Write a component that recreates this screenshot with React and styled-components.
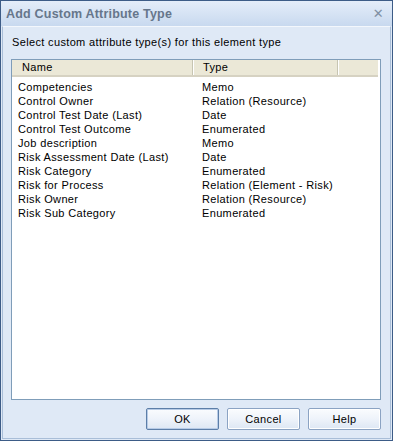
import React from "react";
import styled, { createGlobalStyle } from "styled-components";

const Global = createGlobalStyle`
  html, body { margin: 0; padding: 0; background: #ffffff; }
  * { box-sizing: border-box; }
`;

const Window = styled.div`
  width: 393px;
  height: 441px;
  border: 1px solid #3d5c87;
  background: #dfe9f6;
  display: flex;
  flex-direction: column;
  font-family: "Liberation Sans", Arial, sans-serif;
  font-size: 11px;
  letter-spacing: 0.35px;
  color: #000;
`;

const TitleBar = styled.div`
  height: 25px;
  flex: none;
  display: flex;
  align-items: center;
  justify-content: space-between;
  padding: 0 8px 0 5px;
  background: linear-gradient(#e4edf9 0%, #d6e3f4 50%, #c8d9ef 100%);
`;

const Title = styled.div`
  font-weight: bold;
  font-size: 12.5px;
  color: #66768b;
  letter-spacing: 0.2px;
`;

const Close = styled.div`
  font-size: 13px;
  font-weight: bold;
  color: #8090a4;
  font-family: "DejaVu Sans", sans-serif;
  line-height: 1;
`;

const Body = styled.div`
  flex: 1;
  margin: 0 1px 1px 1px;
  border: 1px solid #a9bed8;
  border-top-color: #f3f7fc;
  display: flex;
  flex-direction: column;
  padding: 9px 9px 3px 8px;
`;

const Label = styled.div`
  line-height: 13px;
  margin-bottom: 10px;
  padding-left: 1px;
`;

const ListBox = styled.div`
  flex: 1;
  border: 1px solid #7f9db9;
  background: #fff;
  display: flex;
  flex-direction: column;
`;

const HeaderRow = styled.div`
  height: 17px;
  display: grid;
  grid-template-columns: 181px 145px 42px;
  background: #ebe8d7;
  border-bottom: 2px solid #d6d2c2;
  margin-right: 2px;
`;

const HeaderCell = styled.div`
  padding-left: 10px;
  line-height: 15px;
  border-right: 1px solid #c7c5b2;
  box-shadow: 1px 0 0 #ffffff;
  &:last-child { border-right: none; box-shadow: none; }
`;

const Rows = styled.div`
  padding-top: 3px;
`;

const Row = styled.div`
  height: 14px;
  line-height: 14px;
  display: grid;
  grid-template-columns: 184px 1fr;
`;

const Cell = styled.div`
  padding-left: 6px;
  white-space: nowrap;
`;

const ButtonBar = styled.div`
  height: 35px;
  display: flex;
  justify-content: flex-end;
  align-items: flex-start;
  gap: 8px;
  padding-top: 8px;
`;

const Button = styled.div`
  width: 73px;
  height: 22px;
  border: 1px solid ${(p) => (p.$default ? "#5c7ea8" : "#8ba3c3")};
  border-radius: 2px;
  background: linear-gradient(#fafcfe 0%, #eef3fa 50%, #dde7f4 100%);
  box-shadow: ${(p) => (p.$default ? "inset 0 0 0 1px #b7cbe6" : "inset 0 0 0 1px #ffffff")};
  display: flex;
  align-items: center;
  justify-content: center;
  color: #000;
`;

const data = [
  ["Competencies", "Memo"],
  ["Control Owner", "Relation (Resource)"],
  ["Control Test Date (Last)", "Date"],
  ["Control Test Outcome", "Enumerated"],
  ["Job description", "Memo"],
  ["Risk Assessment Date (Last)", "Date"],
  ["Risk Category", "Enumerated"],
  ["Risk for Process", "Relation (Element - Risk)"],
  ["Risk Owner", "Relation (Resource)"],
  ["Risk Sub Category", "Enumerated"],
];

export default function App() {
  return (
    <>
      <Global />
      <Window>
        <TitleBar>
          <Title>Add Custom Attribute Type</Title>
          <Close>✕</Close>
        </TitleBar>
        <Body>
          <Label>Select custom attribute type(s) for this element type</Label>
          <ListBox>
            <HeaderRow>
              <HeaderCell>Name</HeaderCell>
              <HeaderCell>Type</HeaderCell>
              <HeaderCell />
            </HeaderRow>
            <Rows>
              {data.map(([n, t]) => (
                <Row key={n}>
                  <Cell>{n}</Cell>
                  <Cell>{t}</Cell>
                </Row>
              ))}
            </Rows>
          </ListBox>
          <ButtonBar>
            <Button $default>OK</Button>
            <Button>Cancel</Button>
            <Button>Help</Button>
          </ButtonBar>
        </Body>
      </Window>
    </>
  );
}
